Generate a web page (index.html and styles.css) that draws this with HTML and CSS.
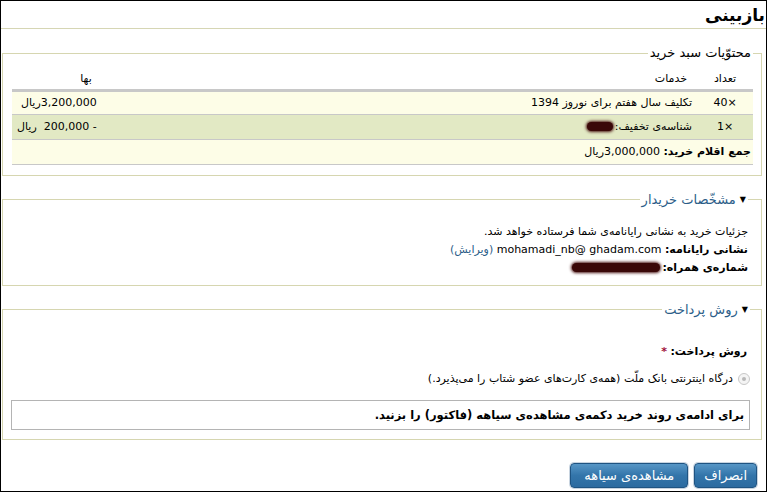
FILE: index.html
```html
<!DOCTYPE html>
<html lang="fa" dir="rtl">
<head>
<meta charset="utf-8">
<title>بازبینی</title>
<link rel="stylesheet" href="styles.css">
</head>
<body>
<div class="page">
  <h1 class="title">بازبینی</h1>

  <fieldset class="box cart">
    <legend class="legend-plain">محتوّیات سبد خرید</legend>
    <table class="items">
      <thead>
        <tr>
          <th class="c-qty">تعداد</th>
          <th class="c-desc">خدمات</th>
          <th class="c-price">بها</th>
        </tr>
      </thead>
      <tbody>
        <tr class="row-a row-first">
          <td class="c-qty">×40</td>
          <td class="c-desc">تکلیف سال هفتم برای نوروز 1394</td>
          <td class="c-price">3,200,000ریال</td>
        </tr>
        <tr class="row-b">
          <td class="c-qty">×1</td>
          <td class="c-desc">شناسه‌ی تخفیف:<span class="blob blob-code"></span></td>
          <td class="c-price"><span class="neg">- 200,000</span>&nbsp; ریال</td>
        </tr>
        <tr class="row-a">
          <td class="total" colspan="3"><b>جمع اقلام خرید:</b> 3,000,000ریال</td>
        </tr>
      </tbody>
    </table>
  </fieldset>

  <fieldset class="box buyer">
    <legend class="legend-link"><span class="caret">▼</span> مشخّصات خریدار</legend>
    <div class="line">جزئیات خرید به نشانی رایانامه‌ی شما فرستاده خواهد شد.</div>
    <div class="line"><b class="lbl">نشانی رایانامه:</b> mohamadi_nb@ ghadam.com <a class="edit" href="#">(ویرایش)</a></div>
    <div class="line"><b class="lbl">شماره‌ی همراه:</b><span class="blob blob-phone"></span></div>
  </fieldset>

  <fieldset class="box pay">
    <legend class="legend-link"><span class="caret">▼</span> روش پرداخت</legend>
    <div class="pay-label"><b>روش پرداخت:</b> <span class="req">*</span></div>
    <label class="radio-line"><span class="radio"><span class="radio-dot"></span></span>درگاه اینترنتی بانک ملّت (همه‌ی کارت‌های عضو شتاب را می‌پذیرد.)</label>
    <div class="notice">برای ادامه‌ی روند خرید دکمه‌ی مشاهده‌ی سیاهه (فاکتور) را بزنید.</div>
  </fieldset>

  <div class="actions">
    <button class="btn" type="button">انصراف</button>
    <button class="btn btn-wide" type="button">مشاهده‌ی سیاهه</button>
  </div>
</div>
</body>
</html>
```
FILE: styles.css
```css
* { box-sizing: border-box; }
html, body { margin: 0; padding: 0; background: #fff; }
body {
  font-family: "DejaVu Sans", Tahoma, sans-serif;
  font-size: 11px;
  color: #000;
}
.page {
  width: 767px;
  height: 492px;
  border: 1px solid #000;
  direction: rtl;
  display: flex;
  flex-direction: column;
}
.title {
  margin: 0;
  height: 28px;
  padding: 4px 1px 0 0;
  font-size: 17px;
  font-weight: bold;
  line-height: 21px;
  border-bottom: 1px solid #d6d6b4;
}
.box {
  margin: 0 4px 0 1px;
  border: 1px solid #d6d6b0;
  min-width: 0;
}
.box legend { padding: 0 2px; line-height: 14px; }
.legend-plain { font-size: 13px; color: #000; }
.legend-link { font-size: 13px; color: #2b5d88; }
.caret { font-size: 8px; color: #000; vertical-align: 2px; }

.cart { margin-top: 17px; padding: 0 8px 10px 9px; }
.items {
  width: 100%;
  border-collapse: collapse;
  margin-top: 11px;
}
.items th {
  font-weight: normal;
  height: 19px;
  padding: 0 5px 3px;
  vertical-align: middle;
  border-bottom: 3px solid #c8c8c8;
  text-align: right;
}
.items td {
  height: 25px;
  padding: 0 5px;
  border-bottom: 1px solid #c8c8c8;
  white-space: nowrap;
}
.items .row-first td { height: 24px; }
.items .c-qty { width: 56px; text-align: center; }
.items .c-price { width: 88px; }
th.c-desc { padding-right: 10px; }
th.c-price { padding-right: 10px; }
.row-a td { background: #fdfde7; }
.row-b td { background: #e2e9c4; }
.items td.total { text-align: right; padding-right: 2px; }

.blob {
  display: inline-block;
  background: #3a0808;
  border-radius: 6px;
  height: 9px;
  vertical-align: -1px;
  box-shadow: 0 0 3px 1px #4a1515;
}
.blob-code { width: 26px; margin-right: 2px; }
.blob-phone { width: 88px; margin-right: 2px; }

.buyer { margin-top: 17px; padding: 16px 13px 8px 10px; }
.line { height: 18px; line-height: 18px; }
.lbl { font-weight: bold; }
.edit { color: #2b5d88; text-decoration: none; }

.pay { margin-top: 17px; padding: 22px 11px 9px 8px; }
.pay-label { height: 26px; line-height: 26px; padding-right: 3px; }
.req { color: #a0113a; font-weight: bold; }
.radio-line {
  display: flex;
  align-items: center;
  gap: 5px;
  height: 28px;
  padding-right: 0;
}
.radio {
  width: 12px;
  height: 12px;
  border-radius: 50%;
  border: 1px solid #c8c8c8;
  background: #f4f4f4;
  display: flex;
  align-items: center;
  justify-content: center;
}
.radio-dot { width: 4px; height: 4px; border-radius: 50%; background: #b8b8b8; }
.notice {
  margin-top: 7px;
  height: 30px;
  border: 1px solid #b4b4b4;
  padding: 0 5px;
  line-height: 28px;
  font-size: 11.5px;
  font-weight: bold;
  background: #fff;
}

.actions {
  margin-top: auto;
  display: flex;
  gap: 6px;
  padding: 0 9px 3px 0;
}
.btn {
  font-family: "DejaVu Sans", Tahoma, sans-serif;
  font-size: 13px;
  color: #fff;
  height: 25px;
  padding: 0 9px;
  border: 1px solid #1f5482;
  border-radius: 4px;
  background: linear-gradient(#5796c6, #3375aa 50%, #2c6ba0);
  box-shadow: 0 0 0 1px #c8d4e0;
}
.btn-wide { padding: 0 13px; }
```
